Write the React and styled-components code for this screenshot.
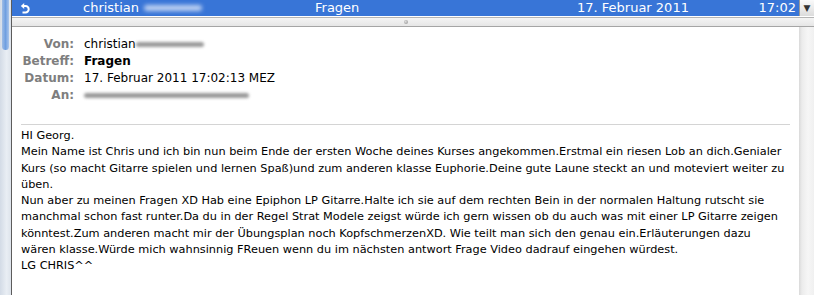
import React from "react";
import styled, { createGlobalStyle } from "styled-components";

const Global = createGlobalStyle`
  html, body { margin: 0; padding: 0; background: #fff; }
  body { width: 814px; height: 295px; overflow: hidden; }
`;

const Window = styled.div`
  display: flex;
  width: 814px;
  height: 295px;
  background: #fff;
  overflow: hidden;
`;

const LeftRail = styled.div`
  position: relative;
  width: 11px;
  flex: none;
  background: linear-gradient(to right, #d3dbe6, #e9eef4 60%, #dde3eb);
  border-right: 1px solid #5c5c5c;
`;

const RailThumb = styled.div`
  position: absolute;
  left: 2px;
  top: -8px;
  width: 7px;
  height: 58px;
  border-radius: 0 0 4px 4px;
  background: linear-gradient(to right, #9fbde6, #6f9fe0 50%, #a9c5ec);
`;

const Main = styled.div`
  flex: 1;
  display: flex;
  flex-direction: column;
  min-width: 0;
`;

const TitleBar = styled.div`
  height: 16px;
  display: grid;
  grid-template-columns: 71px 232px 262px 1fr 15px;
  align-items: center;
  background: #3875d7;
  color: #fff;
  font-family: "DejaVu Sans", sans-serif;
  font-size: 13px;
  line-height: 16px;
  white-space: nowrap;
`;

const IconCell = styled.div`
  display: flex;
  align-items: center;
  padding-left: 8px;
  height: 16px;
`;

const Cell = styled.div`
  display: flex;
  align-items: center;
  justify-content: ${(p) => (p.$spread ? "space-between" : "flex-start")};
  padding-right: ${(p) => (p.$spread ? "3px" : "0")};
  overflow: hidden;
`;

const DropCell = styled.div`
  height: 16px;
  display: flex;
  align-items: center;
  justify-content: center;
  background: linear-gradient(#fafafa, #dcdcdc);
  border-left: 1px solid #9a9a9a;
  color: #333;
  font-size: 9px;
  font-family: "DejaVu Sans", sans-serif;
`;

const Smear = styled.span`
  display: inline-block;
  width: ${(p) => p.$w}px;
  height: ${(p) => p.$h || 5}px;
  margin-left: ${(p) => p.$ml || 0}px;
  background: ${(p) => p.$c};
  border-radius: 4px;
  filter: blur(${(p) => p.$b || 1.5}px);
  vertical-align: middle;
`;

const Splitter = styled.div`
  height: 9px;
  flex: none;
  border-top: 1px solid #fff;
  box-shadow: inset 0 1px 0 #b5b5b5;
  background: linear-gradient(#f6f6f6, #e6e6e6);
  border-bottom: 1px solid #a5a5a5;
  display: flex;
  align-items: center;
  justify-content: center;
  padding-right: 15px;
`;

const Dimple = styled.div`
  width: 4px;
  height: 4px;
  border-radius: 50%;
  background: radial-gradient(circle at 40% 40%, #ddd, #8c8c8c);
  margin-top: 1px;
`;

const Content = styled.div`
  flex: 1;
  display: flex;
  min-height: 0;
`;

const Message = styled.div`
  flex: 1;
  padding: 9px 9px 0 9px;
  min-width: 0;
`;

const Header = styled.div`
  display: grid;
  grid-template-columns: 53px 1fr;
  column-gap: 10px;
  font-family: "DejaVu Sans", sans-serif;
  font-size: 12px;
  line-height: 17px;
  color: #000;
  padding-bottom: 20px;
  border-bottom: 1px solid #d4d4d4;
`;

const Label = styled.div`
  text-align: right;
  font-weight: bold;
  color: #7e7e7e;
  white-space: nowrap;
`;

const Value = styled.div`
  font-weight: ${(p) => (p.$bold ? "bold" : "normal")};
  white-space: nowrap;
`;

const Body = styled.div`
  padding-top: 3px;
  font-family: "DejaVu Sans", Verdana, sans-serif;
  font-size: 11.3px;
  line-height: 16.3px;
  color: #000;
`;

const Line = styled.div`
  white-space: nowrap;
`;

const ScrollTrack = styled.div`
  width: 15px;
  flex: none;
  background: linear-gradient(to right, #d9d9d9, #ececec 3px, #f6f6f6 60%, #f0f0f0);
`;

const ReplyIcon = () => (
  <svg width="10" height="12" viewBox="0 0 10 12">
    <path d="M4.2 1 L0.8 4 L4.2 7 Z" fill="#fff" />
    <path
      d="M3.5 4 H5.5 A3.2 3.2 0 0 1 5.5 10.4 H2.5"
      fill="none"
      stroke="#fff"
      strokeWidth="2"
    />
  </svg>
);

const lines = [
  "HI Georg.",
  "Mein Name ist Chris und ich bin nun beim Ende der ersten Woche deines Kurses angekommen.Erstmal ein riesen Lob an dich.Genialer",
  "Kurs (so macht Gitarre spielen und lernen Spaß)und zum anderen klasse Euphorie.Deine gute Laune steckt an und moteviert weiter zu",
  "üben.",
  "Nun aber zu meinen Fragen XD Hab eine Epiphon LP Gitarre.Halte ich sie auf dem rechten Bein in der normalen Haltung rutscht sie",
  "manchmal schon fast runter.Da du in der Regel Strat Modele zeigst würde ich gern wissen ob du auch was mit einer LP Gitarre zeigen",
  "könntest.Zum anderen macht mir der Übungsplan noch KopfschmerzenXD. Wie teilt man sich den genau ein.Erläuterungen dazu",
  "wären klasse.Würde mich wahnsinnig FReuen wenn du im nächsten antwort Frage Video dadrauf eingehen würdest.",
  "LG CHRIS^^",
];

export default function App() {
  return (
    <>
      <Global />
      <Window>
        <LeftRail>
          <RailThumb />
        </LeftRail>
        <Main>
          <TitleBar>
            <IconCell>
              <ReplyIcon />
            </IconCell>
            <Cell>
              christian
              <Smear $w={58} $h={6} $ml={5} $c="rgba(205,220,245,0.9)" $b={2} />
            </Cell>
            <Cell>Fragen</Cell>
            <Cell $spread>
              <span>17. Februar 2011</span>
              <span>17:02</span>
            </Cell>
            <DropCell>▼</DropCell>
          </TitleBar>
          <Splitter>
            <Dimple />
          </Splitter>
          <Content>
            <Message>
              <Header>
                <Label>Von:</Label>
                <Value>
                  christian
                  <Smear $w={68} $h={5} $c="rgba(120,120,120,0.75)" $b={1.6} />
                </Value>
                <Label>Betreff:</Label>
                <Value $bold>Fragen</Value>
                <Label>Datum:</Label>
                <Value>17. Februar 2011 17:02:13 MEZ</Value>
                <Label>An:</Label>
                <Value>
                  <Smear $w={165} $h={5} $c="rgba(110,110,110,0.7)" $b={1.8} />
                </Value>
              </Header>
              <Body>
                {lines.map((l, i) => (
                  <Line key={i}>{l}</Line>
                ))}
              </Body>
            </Message>
            <ScrollTrack />
          </Content>
        </Main>
      </Window>
    </>
  );
}
